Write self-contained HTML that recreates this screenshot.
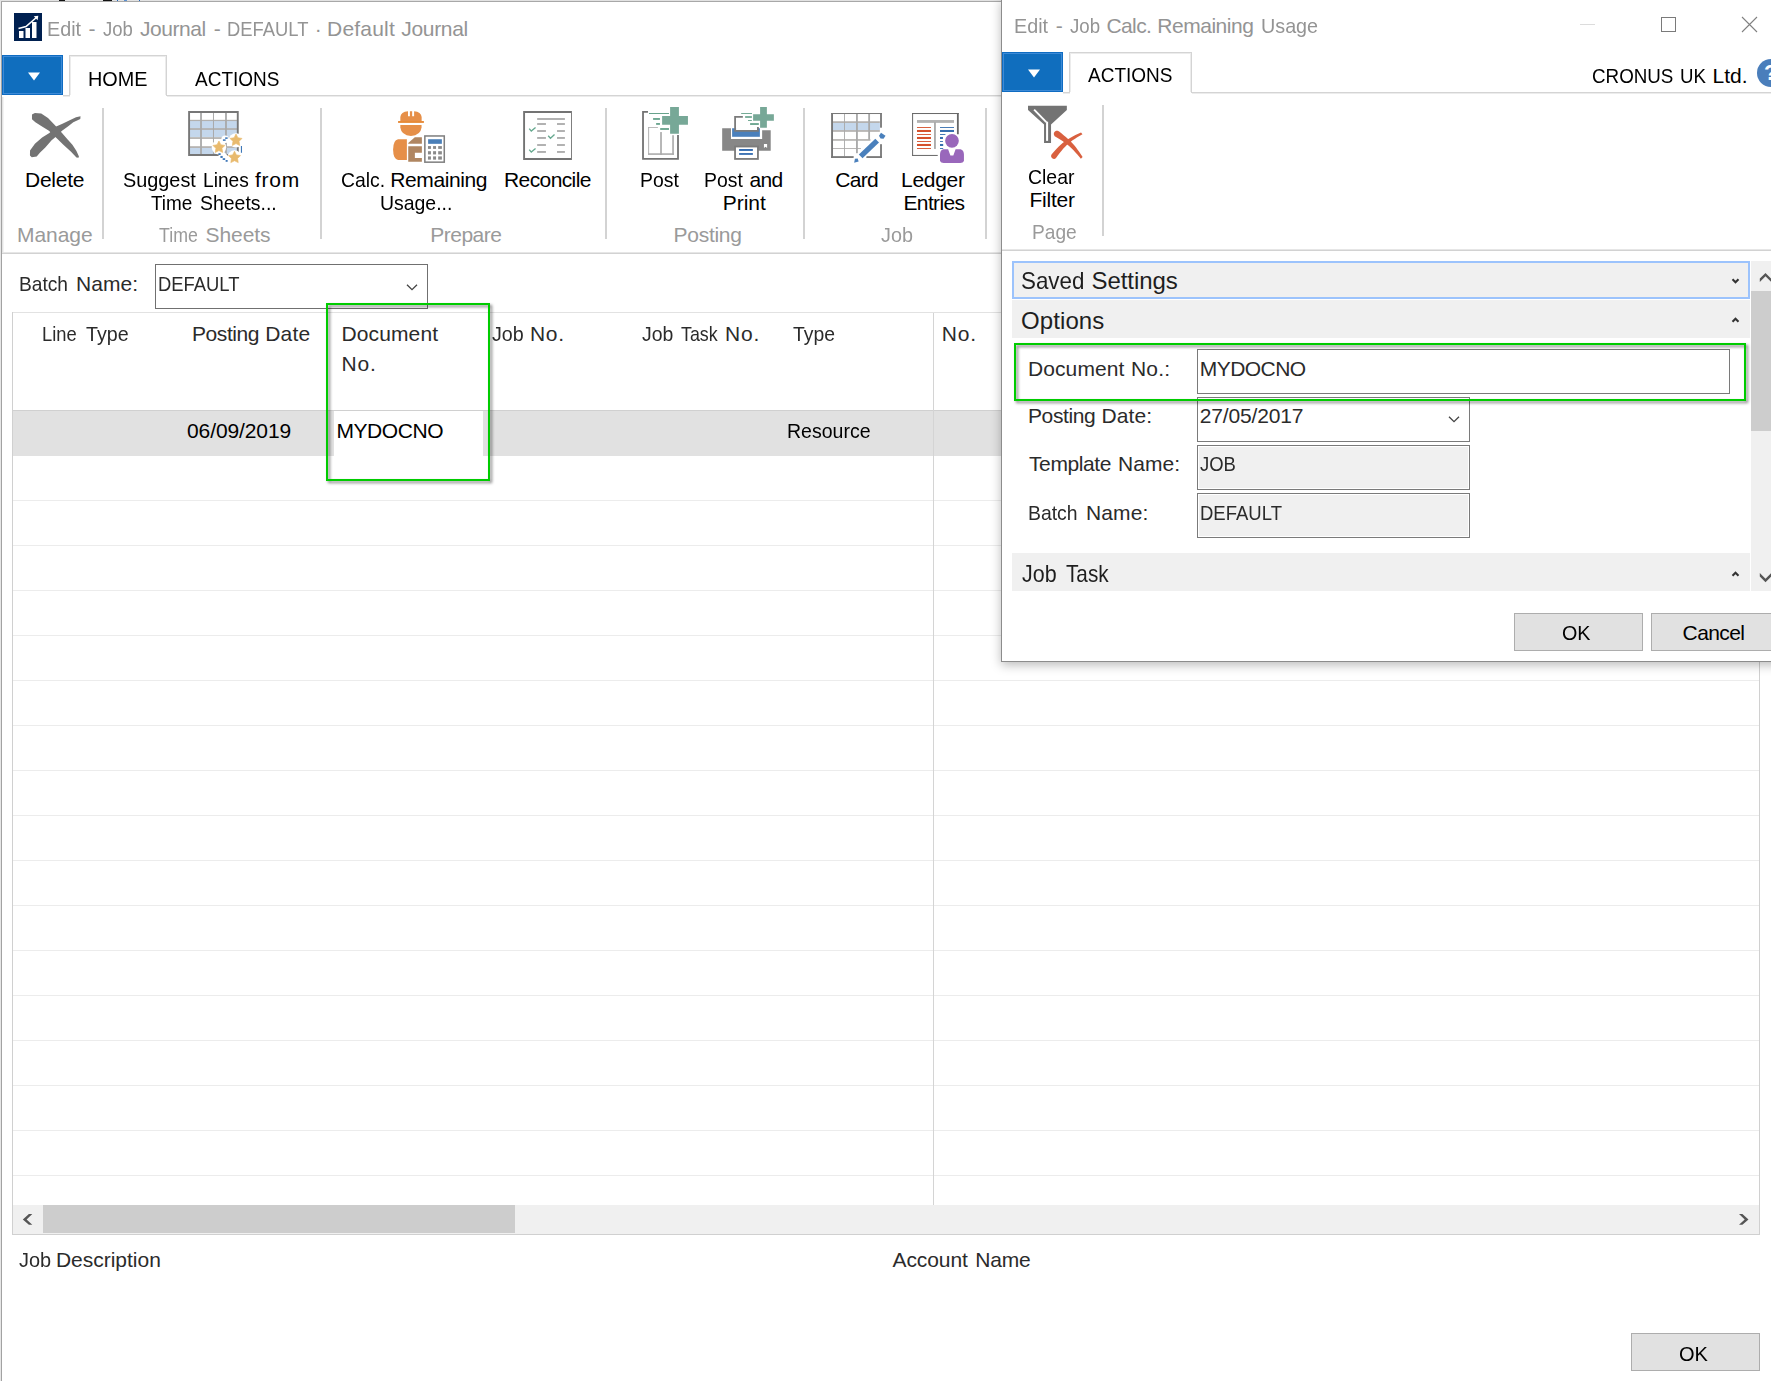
<!DOCTYPE html>
<html lang="en">
<head>
<meta charset="utf-8">
<title>Edit - Job Journal - DEFAULT · Default Journal</title>
<style>
html,body{margin:0;padding:0;}
body{width:1771px;height:1381px;position:relative;overflow:hidden;background:#fff;font-family:"Liberation Sans",sans-serif;}
.t{position:absolute;white-space:pre;line-height:1;z-index:30;transform-origin:0 0;}
.b{position:absolute;box-sizing:border-box;}
.ln{position:absolute;background:#d4d4d4;}
.ln2{position:absolute;background:#ececec;height:1px;}
.sep{position:absolute;width:2px;background:#d3d3d3;}
.rl{position:absolute;left:13px;width:1746px;height:1px;background:#ececec;}
.blue{background:#106ebe;box-shadow:inset 0 0 0 1px #0f6cc2, inset 0 0 0 2px #3d8ad6;}
.tab{border:1px solid #d4d4d4;border-bottom:none;background:#fff;box-shadow:inset 1px 1px 0 #ececec, inset -1px 0 0 #ececec;}
.btn{background:#e1e1e1;border:1px solid #adadad;}
.inp{border:1px solid #7a7a7a;background:#fff;}
.ro{background:#f0f0f0;box-shadow:inset 0 0 0 1px #fff;}
.band{background:#f0f0f0;}
.green{border:2px solid #00cc00;filter:drop-shadow(2.5px 2.5px 1.6px rgba(0,0,0,.5));z-index:40;}
svg{position:absolute;overflow:visible;}
#dlg{z-index:20;}
.d{z-index:25;}
</style>
</head>
<body>
<!-- ================= main window ================= -->
<div class="ln" style="left:0;top:0;width:1px;height:1381px;background:#e6e6e6"></div><div class="ln" style="left:1px;top:1px;width:1px;height:1380px;background:#a2a2a2"></div>
<div class="ln" style="left:0;top:0;width:1002px;height:1px;background:#e2e2e2"></div><div class="ln" style="left:1px;top:1px;width:1001px;height:1px;background:#a8a8a8"></div>
<div class="ln" style="left:59px;top:0;width:6px;height:1px;background:#111"></div><div class="ln" style="left:103px;top:0;width:9px;height:1px;background:#111"></div>
<div class="ln" style="left:117px;top:0;width:1px;height:1px;background:#1f66c0"></div><div class="ln" style="left:124px;top:0;width:3px;height:1px;background:#5a8fd0"></div><div class="ln" style="left:139px;top:0;width:1px;height:1px;background:#1f66c0"></div>
<div class="ln" style="left:2px;top:97px;width:1px;height:156px;background:#e4e4e4"></div><div class="ln" style="left:3px;top:97px;width:1px;height:156px;background:#f3f3f3"></div>

<div class="b" style="left:14px;top:13px;width:28px;height:28px;background:#002050"></div>
<svg style="left:14px;top:13px" width="28" height="28" viewBox="0 0 28 28">
 <rect x="5" y="18" width="4.5" height="7" fill="#fff"/><rect x="11.5" y="15" width="4.5" height="10" fill="#fff"/><rect x="18" y="9" width="4.5" height="16" fill="#fff"/>
 <path d="M4.5 15.5 L12 13.5 L23 4" stroke="#fff" stroke-width="1.6" fill="none"/><path d="M19.8 3.2 L24.3 2.8 L23.6 7.3 Z" fill="#fff"/>
</svg>

<div class="b blue" style="left:2px;top:55px;width:61px;height:40px"></div>
<svg style="left:28px;top:72px" width="12" height="9" viewBox="0 0 12 9"><path d="M0 0.5 H12 L6 8.5 Z" fill="#fff"/></svg>
<div class="b tab" style="left:69px;top:55px;width:98px;height:40px"></div>
<div class="ln" style="left:63px;top:95px;width:7px;height:1px"></div><div class="ln2" style="left:63px;top:96px;width:7px"></div>
<div class="ln" style="left:166px;top:95px;width:836px;height:1px"></div><div class="ln2" style="left:167px;top:96px;width:835px"></div>
<div class="ln" style="left:2px;top:252px;width:1000px;height:1px;background:#e6e6e6"></div><div class="ln" style="left:2px;top:253px;width:1000px;height:1px;background:#d2d2d2"></div>
<div class="sep" style="left:102px;top:108px;height:131px"></div>
<div class="sep" style="left:320px;top:108px;height:131px"></div>
<div class="sep" style="left:605px;top:108px;height:131px"></div>
<div class="sep" style="left:803px;top:108px;height:131px"></div>
<div class="sep" style="left:985px;top:108px;height:131px"></div>

<!-- batch name dropdown -->
<div class="b inp" style="left:155px;top:264px;width:273px;height:45px;border-color:#707070"></div>
<svg style="left:406px;top:284px" width="12" height="7" viewBox="0 0 12 7"><path d="M1 0.8 L6 5.6 L11 0.8" stroke="#444" stroke-width="1.3" fill="none"/></svg>

<!-- table -->
<div class="ln" style="left:12px;top:312px;width:1748px;height:1px;background:#e2e2e2"></div>
<div class="ln" style="left:12px;top:312px;width:1px;height:923px;background:#d0d0d0"></div>
<div class="ln" style="left:1759px;top:312px;width:1px;height:923px;background:#d0d0d0"></div>
<div class="ln" style="left:12px;top:1234px;width:1748px;height:1px;background:#d0d0d0"></div>
<div class="b" style="left:13px;top:410px;width:1746px;height:46px;background:#e1e1e1;border-top:1px solid #d0d0d0"></div>
<div class="b" style="left:334px;top:411px;width:149px;height:45px;background:#fff"></div>
<div class="rl" style="top:500px"></div>
<div class="rl" style="top:545px"></div>
<div class="rl" style="top:590px"></div>
<div class="rl" style="top:635px"></div>
<div class="rl" style="top:680px"></div>
<div class="rl" style="top:725px"></div>
<div class="rl" style="top:770px"></div>
<div class="rl" style="top:815px"></div>
<div class="rl" style="top:860px"></div>
<div class="rl" style="top:905px"></div>
<div class="rl" style="top:950px"></div>
<div class="rl" style="top:995px"></div>
<div class="rl" style="top:1040px"></div>
<div class="rl" style="top:1085px"></div>
<div class="rl" style="top:1130px"></div>
<div class="rl" style="top:1175px"></div>
<div class="ln" style="left:933px;top:313px;width:1px;height:892px;background:#d4d4d4"></div>
<!-- h scrollbar -->
<div class="b" style="left:13px;top:1205px;width:1746px;height:29px;background:#f0f0f0"></div>
<div class="b" style="left:43px;top:1205px;width:472px;height:28px;background:#cdcdcd"></div>
<svg style="left:0;top:0" width="1771" height="1381"><path fill="#555" d="M32.3 1214 H28.9 L22.8 1219.4 L28.9 1224.8 H32.3 L26.6 1219.4 Z"/><path fill="#555" d="M1739 1214 H1742.4 L1748.5 1219.4 L1742.4 1224.8 H1739 L1744.7 1219.4 Z"/></svg>
<div class="b btn" style="left:1631px;top:1333px;width:129px;height:38px"></div>

<!-- Delete -->
<svg style="left:20px;top:104px" width="80" height="62" viewBox="0 0 1771 1373">
 <path fill="#737373" d="M265 235 L330 200 L470 212 L620 310 L790 485 L930 640 L1050 780 L1160 900 L1250 1040 L1305 1160 L1295 1188 L1250 1182 L1130 1060 L960 905 L830 775 L640 595 L470 485 L340 405 L265 340 Z"/>
 <path fill="#737373" d="M222 1030 L330 880 L490 740 L650 640 L800 500 L940 440 L1100 360 L1240 292 L1340 272 L1335 330 L1180 405 L1060 500 L930 592 L800 722 L700 802 L560 962 L440 1082 L370 1165 L260 1178 L220 1140 Z"/>
</svg>
<!-- Suggest lines -->
<svg style="left:180px;top:104px" width="80" height="62" viewBox="0 0 1771 1373">
 <rect x="200" y="175" width="1080" height="955" fill="#fff"/>
 <rect x="220" y="375" width="1040" height="355" fill="#c4d7ec"/>
 <rect x="220" y="975" width="1040" height="150" fill="#c4d7ec"/>
 <g fill="#b2b0ae"><rect x="220" y="350" width="1040" height="28"/><rect x="220" y="535" width="1040" height="38"/><rect x="220" y="735" width="1040" height="38"/><rect x="220" y="935" width="1040" height="38"/></g>
 <g fill="#a9a9a9"><rect x="445" y="195" width="40" height="935"/><rect x="730" y="195" width="22" height="935"/><rect x="998" y="195" width="40" height="935"/></g>
 <path fill="none" stroke="#777" stroke-width="42" d="M201 176 H1279 V1129 H201 Z"/>
 <rect x="730" y="620" width="680" height="720" fill="#fff" opacity="0"/>
 <g fill="#fff"><circle cx="1240" cy="805" r="160"/><circle cx="862" cy="960" r="160"/><circle cx="1207" cy="1185" r="160"/><circle cx="1000" cy="780" r="85"/><circle cx="950" cy="1180" r="105"/></g>
 <g fill="#e8ba6e" stroke="#e8ba6e" stroke-width="14" stroke-linejoin="round">
  <path d="M1240 665 L1282 747 L1373 762 L1308 827 L1322 918 L1240 877 L1158 918 L1172 827 L1107 762 L1198 747 Z"/>
  <path d="M862 820 L904 902 L995 917 L930 982 L944 1073 L862 1032 L780 1073 L794 982 L729 917 L820 902 Z"/>
  <path d="M1207 1045 L1249 1127 L1340 1142 L1275 1207 L1289 1298 L1207 1257 L1125 1298 L1139 1207 L1074 1142 L1165 1127 Z"/>
 </g>
 <g fill="#3f78b8"><rect x="1000" y="738" width="55" height="35"/><rect x="950" y="782" width="60" height="35"/><rect x="850" y="1090" width="50" height="40"/><rect x="895" y="1150" width="50" height="45"/><rect x="945" y="1200" width="55" height="40"/><rect x="1010" y="1240" width="45" height="40"/><rect x="1348" y="930" width="25" height="150"/></g>
</svg>
<!-- Calc remaining usage -->
<svg style="left:380px;top:104px" width="80" height="62" viewBox="0 0 1771 1373">
 <path fill="#e68f48" d="M450 380 V290 Q460 170 620 160 V270 H662 V160 H712 V270 H755 V160 Q910 170 922 290 V380 Z"/>
 <rect x="400" y="378" width="572" height="40" fill="#e5842e"/>
 <path fill="#e68f48" d="M450 465 H920 V520 Q900 690 685 710 Q470 690 450 520 Z"/>
 <path fill="#e68f48" d="M595 780 V1238 H400 Q290 1220 290 1010 Q290 800 400 780 Z"/>
 <path fill="#b08661" d="M770 735 H927 V882 H625 V862 Z"/>
 <path fill="#b08661" d="M625 935 H927 V1080 H772 V1195 H927 V1280 H625 Z"/>
 <rect x="993" y="708" width="430" height="580" fill="#fff" stroke="#808080" stroke-width="34"/>
 <rect x="1065" y="780" width="305" height="102" fill="#4a7fb8"/>
 <g fill="#8a8a8a"><rect x="1062" y="932" width="66" height="62"/><rect x="1175" y="932" width="66" height="62"/><rect x="1288" y="932" width="82" height="62"/>
 <rect x="1062" y="1045" width="66" height="72"/><rect x="1175" y="1045" width="66" height="72"/><rect x="1288" y="1045" width="82" height="72"/>
 <rect x="1062" y="1160" width="66" height="72"/><rect x="1175" y="1160" width="66" height="72"/><rect x="1288" y="1160" width="82" height="72"/></g>
</svg>
<!-- Reconcile -->
<svg style="left:508px;top:104px" width="80" height="62" viewBox="0 0 1771 1373">
 <path fill="#737373" fill-rule="evenodd" d="M335 155 H1415 V1240 H335 Z M377 198 V1198 H1395 V198 Z"/>
 <g fill="#aaa"><rect x="645" y="312" width="615" height="40"/>
 <rect x="645" y="423" width="195" height="40"/><rect x="1085" y="423" width="175" height="40"/>
 <rect x="645" y="578" width="195" height="40"/><rect x="1085" y="578" width="175" height="40"/>
 <rect x="645" y="732" width="195" height="40"/><rect x="1085" y="732" width="175" height="40"/>
 <rect x="645" y="888" width="195" height="40"/><rect x="1085" y="888" width="175" height="40"/>
 <rect x="645" y="1042" width="195" height="40"/><rect x="1085" y="1042" width="175" height="40"/></g>
 <g fill="none" stroke="#4c9a7c" stroke-width="30" opacity="0.85"><path d="M470 545 L515 600 L610 520"/><path d="M890 702 L940 757 L1030 675"/><path d="M470 1010 L515 1065 L610 985"/></g>
</svg>
<!-- Post -->
<svg style="left:622px;top:100px" width="80" height="62" viewBox="0 0 1771 1373">
 <path fill="none" stroke="#737373" stroke-width="40" d="M575 265 H465 V1305 H1240 V775"/>
 <g fill="#aaa"><rect x="580" y="600" width="20" height="615"/><rect x="580" y="600" width="215" height="18"/><rect x="580" y="1180" width="570" height="35"/><rect x="845" y="710" width="37" height="505"/><rect x="1112" y="780" width="36" height="435"/></g>
 <g fill="#67a38c"><rect x="598" y="288" width="442" height="22"/><rect x="688" y="400" width="152" height="40"/><rect x="755" y="510" width="85" height="40"/><rect x="845" y="622" width="195" height="40"/></g>
 <path fill="#77a897" d="M1065 155 H1260 V355 H1460 V550 H1260 V750 H1065 V550 H888 V355 H1065 Z"/>
</svg>
<!-- Post and Print -->
<svg style="left:705px;top:100px" width="80" height="62" viewBox="0 0 1771 1373">
 <path fill="#878787" d="M380 625 H575 V865 H1265 V670 H1455 V1125 H380 Z"/>
 <path fill="#4a80bc" d="M600 625 H1215 V815 H600 Z"/>
 <rect x="688" y="395" width="467" height="270" fill="#fff"/>
 <path fill="none" stroke="#7b7b7b" stroke-width="40" d="M838 375 H666 V685 H1172 V598"/>
 <g fill="#67a38c"><rect x="800" y="288" width="240" height="20"/><rect x="888" y="358" width="150" height="37"/><rect x="952" y="445" width="86" height="20"/><rect x="998" y="512" width="194" height="40"/></g>
 <path fill="#77a897" d="M1220 155 H1370 V315 H1525 V462 H1370 V615 H1220 V462 H1065 V315 H1220 Z"/>
 <rect x="665" y="1030" width="507" height="275" fill="#fff" stroke="#7b7b7b" stroke-width="40"/>
 <rect x="755" y="1085" width="305" height="43" fill="#346cb0"/><rect x="755" y="1175" width="305" height="40" fill="#346cb0"/>
 <path fill="#fff" d="M1305 975 H1375 V1065 L1340 1035 L1305 1065 Z"/>
</svg>
<!-- Card -->
<svg style="left:818px;top:104px" width="80" height="62" viewBox="0 0 1771 1373">
 <rect x="330" y="420" width="1040" height="158" fill="#c4d7ec"/>
 <g fill="#b2b0ae"><rect x="330" y="382" width="1040" height="38"/><rect x="330" y="578" width="1040" height="38"/><rect x="330" y="778" width="830" height="36"/><rect x="330" y="975" width="620" height="20"/></g>
 <g fill="#a9a9a9"><rect x="577" y="220" width="20" height="940"/><rect x="842" y="220" width="40" height="870"/><rect x="1112" y="220" width="40" height="570"/></g>
 <g fill="#777"><rect x="290" y="200" width="42" height="995"/><rect x="290" y="200" width="1125" height="22"/><rect x="1375" y="200" width="40" height="325"/><rect x="1375" y="890" width="40" height="305"/><rect x="290" y="1155" width="500" height="40"/><rect x="1070" y="1155" width="345" height="40"/></g>
 <path fill="none" stroke="#fff" stroke-width="175" d="M850 1250 L1440 690"/>
 <path fill="none" stroke="#4a80bc" stroke-width="118" d="M945 1160 L1310 812"/>
 <path fill="#4a80bc" d="M800 1300 L818 1212 L878 1208 L900 1272 Z"/>
 <path fill="#4a80bc" d="M1350 705 L1395 635 L1495 702 L1450 770 L1385 765 Z"/>
</svg>
<!-- Ledger entries -->
<svg style="left:898px;top:104px" width="80" height="62" viewBox="0 0 1771 1373">
 <g fill="#666"><rect x="312" y="200" width="22" height="950"/><rect x="312" y="200" width="1033" height="22"/><rect x="1305" y="200" width="40" height="470"/><rect x="312" y="1128" width="568" height="22"/></g>
 <rect x="420" y="355" width="820" height="63" fill="#b2b2b2"/><rect x="798" y="400" width="40" height="595" fill="#a9a9a9"/>
 <g fill="#d5502b"><rect x="420" y="510" width="310" height="20"/><rect x="420" y="575" width="310" height="45"/><rect x="420" y="665" width="310" height="20"/><rect x="420" y="730" width="310" height="45"/><rect x="420" y="820" width="310" height="20"/><rect x="420" y="885" width="310" height="45"/><rect x="420" y="975" width="310" height="20"/></g>
 <g fill="#376fb0"><rect x="930" y="510" width="310" height="20"/><rect x="930" y="575" width="310" height="45"/><rect x="930" y="665" width="120" height="20"/><rect x="930" y="730" width="65" height="45"/><rect x="930" y="820" width="65" height="20"/><rect x="930" y="885" width="70" height="45"/><rect x="930" y="975" width="70" height="20"/></g>
 <circle cx="1195" cy="815" r="175" fill="#fff"/>
 <circle cx="1195" cy="815" r="152" fill="#9967bb"/>
 <path fill="#9967bb" d="M1000 1000 H1110 L1160 1140 H1225 L1275 1000 H1385 Q1460 1020 1460 1120 V1260 Q1440 1300 1380 1305 H1010 Q950 1300 930 1260 V1120 Q930 1020 1000 1000 Z"/>
</svg>
<!-- Clear filter -->
<svg class="d" style="left:1014px;top:100px" width="80" height="62" viewBox="0 0 1771 1373">
 <path fill="#737373" d="M310 130 H1170 V220 L820 545 V950 H665 V545 L310 220 Z"/>
 <rect x="710" y="480" width="45" height="425" fill="#fff"/>
 <path fill="none" stroke="#fff" stroke-width="42" d="M445 215 L715 490"/>
 <path fill="#d9603f" d="M901 800 L957 835 L1012 869 L1066 905 L1119 942 L1170 981 L1219 1021 L1266 1064 L1312 1108 L1356 1155 L1398 1202 L1440 1251 L1481 1300 L1519 1260 L1483 1206 L1446 1152 L1409 1100 L1370 1048 L1329 999 L1287 951 L1242 905 L1196 862 L1148 819 L1099 779 L1049 739 L999 700 L967 682 L931 683 L900 701 L882 733 L883 769 Z"/>
 <path fill="#d9603f" d="M926 1290 L966 1235 L1007 1181 L1049 1127 L1093 1076 L1138 1028 L1186 982 L1237 939 L1289 899 L1344 862 L1400 827 L1458 793 L1516 759 L1484 721 L1422 749 L1360 777 L1300 808 L1241 840 L1184 875 L1129 912 L1077 953 L1027 996 L980 1042 L933 1090 L888 1139 L844 1190 L824 1217 L821 1250 L835 1281 L862 1301 L895 1304 Z"/>
</svg>


<!-- green highlight 1 -->
<div class="b green" style="left:326px;top:303px;width:164px;height:178px"></div>

<!-- ================= dialog ================= -->
<div id="dlg" class="b" style="left:1001px;top:-2px;width:800px;height:664px;background:#fff;border:1px solid #8c8c8c;box-shadow:0 3px 10px rgba(0,0,0,.27)"></div>
<div class="b blue d" style="left:1002px;top:52px;width:61px;height:40px"></div>
<svg class="d" style="left:1028px;top:68.5px" width="12" height="9" viewBox="0 0 12 9"><path d="M0 0.5 H12 L6 8.5 Z" fill="#fff"/></svg>
<div class="b tab d" style="left:1069px;top:52px;width:123px;height:40px"></div>
<div class="ln d" style="left:1063px;top:92px;width:7px;height:1px"></div><div class="ln2 d" style="left:1063px;top:93px;width:7px"></div>
<div class="ln d" style="left:1191px;top:92px;width:580px;height:1px"></div><div class="ln2 d" style="left:1192px;top:93px;width:580px"></div>
<div class="ln d" style="left:1002px;top:249px;width:769px;height:1px;background:#e6e6e6"></div><div class="ln d" style="left:1002px;top:250px;width:769px;height:1px;background:#d2d2d2"></div>
<div class="sep d" style="left:1102px;top:105px;height:131px"></div>
<!-- window controls -->
<div class="ln d" style="left:1580px;top:24px;width:15px;height:1px;background:#dcdcdc"></div>
<div class="b d" style="left:1661px;top:17px;width:15px;height:15px;border:1px solid #7a7a7a"></div>
<svg class="d" style="left:1742px;top:17px" width="15" height="15" viewBox="0 0 15 15"><path d="M0 0 L15 15 M15 0 L0 15" stroke="#808080" stroke-width="1.1" fill="none"/></svg>
<!-- help -->
<div class="b d" style="left:1757px;top:59px;width:28px;height:28px;border-radius:14px;background:#4a7ebb"></div>
<span class="t" style="left:1764px;top:62px;font-size:22px;font-weight:bold;color:#fff;z-index:31">?</span>

<!-- fasttabs -->
<div class="b d" style="left:1012px;top:261px;width:738px;height:38px;background:#f0f0f0;border:2px solid #9cc3fc"></div>
<div class="b band d" style="left:1012px;top:300px;width:738px;height:38px"></div>
<div class="b band d" style="left:1012px;top:553px;width:738px;height:38px"></div>
<svg class="d" style="left:1731px;top:277.5px" width="9" height="6" viewBox="0 0 9 6"><path d="M1.5 1.2 L4.5 4.2 L7.5 1.2" stroke="#333" stroke-width="2.1" fill="none"/></svg>
<svg class="d" style="left:1731px;top:317px" width="9" height="6" viewBox="0 0 9 6"><path d="M1.5 4.8 L4.5 1.8 L7.5 4.8" stroke="#333" stroke-width="2.1" fill="none"/></svg>
<svg class="d" style="left:1731px;top:570.5px" width="9" height="6" viewBox="0 0 9 6"><path d="M1.5 4.8 L4.5 1.8 L7.5 4.8" stroke="#333" stroke-width="2.1" fill="none"/></svg>
<!-- fields -->
<div class="b inp d" style="left:1197px;top:349px;width:533px;height:45px"></div>
<div class="b inp d" style="left:1197px;top:397px;width:273px;height:45px"></div>
<div class="b inp ro d" style="left:1197px;top:445px;width:273px;height:45px"></div>
<div class="b inp ro d" style="left:1197px;top:493px;width:273px;height:45px"></div>
<svg class="d" style="left:1448px;top:416px" width="12" height="7" viewBox="0 0 12 7"><path d="M1 0.8 L6 5.6 L11 0.8" stroke="#444" stroke-width="1.3" fill="none"/></svg>
<!-- v scrollbar -->
<div class="b d" style="left:1751px;top:261px;width:20px;height:330px;background:#f0f0f0"></div>
<div class="b d" style="left:1751px;top:291px;width:20px;height:140px;background:#cdcdcd"></div>
<svg class="d" style="left:0;top:0" width="1771" height="700"><path fill="#555" d="M1759.8 282 V278.6 L1765.5 272.9 L1771.2 278.6 V282 L1765.5 276.3 Z"/><path fill="#555" d="M1759.8 573.1 V576.5 L1765.5 582.2 L1771.2 576.5 V573.1 L1765.5 578.8 Z"/></svg>
<!-- buttons -->
<div class="b btn d" style="left:1514px;top:613px;width:129px;height:38px"></div>
<div class="b btn d" style="left:1651px;top:613px;width:129px;height:38px"></div>

<!-- green highlight 2 -->
<div class="b green" style="left:1014px;top:343px;width:732px;height:58px"></div>

<span class="t" style="left:47.06px;top:18.00px;font-size:21px;transform:scaleX(0.9406);color:#949494">Edit</span>
<span class="t" style="left:88.62px;top:18.00px;font-size:21px;letter-spacing:0.000px;color:#949494">-</span>
<span class="t" style="left:102.50px;top:18.00px;font-size:21px;transform:scaleX(0.8816);color:#949494">Job</span>
<span class="t" style="left:140.00px;top:18.00px;font-size:21px;letter-spacing:-0.452px;color:#949494">Journal</span>
<span class="t" style="left:213.75px;top:18.00px;font-size:21px;letter-spacing:0.000px;color:#949494">-</span>
<span class="t" style="left:227.12px;top:18.00px;font-size:21px;transform:scaleX(0.8764);color:#949494">DEFAULT</span>
<span class="t" style="left:314.75px;top:18.00px;font-size:21px;letter-spacing:0.000px;color:#949494">·</span>
<span class="t" style="left:327.00px;top:18.00px;font-size:21px;letter-spacing:0.216px;color:#949494">Default</span>
<span class="t" style="left:401.25px;top:18.00px;font-size:21px;letter-spacing:-0.327px;color:#949494">Journal</span>
<span class="t" style="left:88.31px;top:68.00px;font-size:21px;transform:scaleX(0.9445);color:#000">HOME</span>
<span class="t" style="left:194.80px;top:68.00px;font-size:21px;transform:scaleX(0.9043);color:#000">ACTIONS</span>
<span class="t" style="left:25.00px;top:169.00px;font-size:21px;letter-spacing:-0.255px;color:#000">Delete</span>
<span class="t" style="left:123.25px;top:169.00px;font-size:21px;transform:scaleX(0.9453);color:#000">Suggest</span>
<span class="t" style="left:203.34px;top:169.00px;font-size:21px;transform:scaleX(0.9137);color:#000">Lines</span>
<span class="t" style="left:255.00px;top:169.00px;font-size:21px;letter-spacing:0.748px;color:#000">from</span>
<span class="t" style="left:151.25px;top:192.00px;font-size:21px;transform:scaleX(0.9014);color:#000">Time</span>
<span class="t" style="left:200.00px;top:192.00px;font-size:21px;transform:scaleX(0.9254);color:#000">Sheets...</span>
<span class="t" style="left:340.83px;top:169.00px;font-size:21px;transform:scaleX(0.9220);color:#000">Calc.</span>
<span class="t" style="left:390.25px;top:169.00px;font-size:21px;letter-spacing:-0.401px;color:#000">Remaining</span>
<span class="t" style="left:379.82px;top:192.00px;font-size:21px;transform:scaleX(0.9254);color:#000">Usage...</span>
<span class="t" style="left:504.00px;top:169.00px;font-size:21px;letter-spacing:-0.598px;color:#000">Reconcile</span>
<span class="t" style="left:639.83px;top:169.00px;font-size:21px;transform:scaleX(0.9226);color:#000">Post</span>
<span class="t" style="left:703.58px;top:169.00px;font-size:21px;transform:scaleX(0.9226);color:#000">Post</span>
<span class="t" style="left:749.50px;top:169.00px;font-size:21px;letter-spacing:-0.679px;color:#000">and</span>
<span class="t" style="left:722.75px;top:192.00px;font-size:21px;letter-spacing:-0.024px;color:#000">Print</span>
<span class="t" style="left:835.25px;top:169.00px;font-size:21px;letter-spacing:-0.696px;color:#000">Card</span>
<span class="t" style="left:901.00px;top:169.00px;font-size:21px;letter-spacing:-0.279px;color:#000">Ledger</span>
<span class="t" style="left:903.50px;top:192.00px;font-size:21px;letter-spacing:-0.643px;color:#000">Entries</span>
<span class="t" style="left:17.00px;top:224.00px;font-size:21px;letter-spacing:-0.042px;color:#9a9a9a">Manage</span>
<span class="t" style="left:159.25px;top:224.00px;font-size:21px;transform:scaleX(0.8461);color:#9a9a9a">Time</span>
<span class="t" style="left:205.50px;top:224.00px;font-size:21px;letter-spacing:-0.076px;color:#9a9a9a">Sheets</span>
<span class="t" style="left:430.25px;top:224.00px;font-size:21px;letter-spacing:-0.505px;color:#9a9a9a">Prepare</span>
<span class="t" style="left:673.50px;top:224.00px;font-size:21px;letter-spacing:-0.269px;color:#9a9a9a">Posting</span>
<span class="t" style="left:881.25px;top:224.00px;font-size:21px;transform:scaleX(0.9419);color:#9a9a9a">Job</span>
<span class="t" style="left:18.59px;top:273.00px;font-size:21px;transform:scaleX(0.9131);color:#2b2b2b">Batch</span>
<span class="t" style="left:76.00px;top:273.00px;font-size:21px;letter-spacing:0.058px;color:#2b2b2b">Name:</span>
<span class="t" style="left:158.37px;top:273.00px;font-size:21px;transform:scaleX(0.8764);color:#2b2b2b">DEFAULT</span>
<span class="t" style="left:42.13px;top:323.00px;font-size:21px;transform:scaleX(0.8744);color:#2b2b2b">Line</span>
<span class="t" style="left:86.25px;top:323.00px;font-size:21px;transform:scaleX(0.9365);color:#2b2b2b">Type</span>
<span class="t" style="left:192.00px;top:323.00px;font-size:21px;letter-spacing:-0.436px;color:#2b2b2b">Posting</span>
<span class="t" style="left:265.25px;top:323.00px;font-size:21px;letter-spacing:0.190px;color:#2b2b2b">Date</span>
<span class="t" style="left:341.50px;top:323.00px;font-size:21px;letter-spacing:0.118px;color:#2b2b2b">Document</span>
<span class="t" style="left:341.50px;top:353.00px;font-size:21px;letter-spacing:0.828px;color:#2b2b2b">No.</span>
<span class="t" style="left:492.10px;top:323.00px;font-size:21px;transform:scaleX(0.9373);color:#2b2b2b">Job</span>
<span class="t" style="left:529.90px;top:323.00px;font-size:21px;letter-spacing:0.778px;color:#2b2b2b">No.</span>
<span class="t" style="left:642.40px;top:323.00px;font-size:21px;transform:scaleX(0.9253);color:#2b2b2b">Job</span>
<span class="t" style="left:680.70px;top:323.00px;font-size:21px;transform:scaleX(0.8494);color:#2b2b2b">Task</span>
<span class="t" style="left:725.10px;top:323.00px;font-size:21px;letter-spacing:0.778px;color:#2b2b2b">No.</span>
<span class="t" style="left:793.00px;top:323.00px;font-size:21px;transform:scaleX(0.9209);color:#2b2b2b">Type</span>
<span class="t" style="left:941.80px;top:323.00px;font-size:21px;letter-spacing:0.828px;color:#2b2b2b">No.</span>
<span class="t" style="left:187.00px;top:420.00px;font-size:21px;letter-spacing:-0.103px;color:#000">06/09/2019</span>
<span class="t" style="left:336.50px;top:420.00px;font-size:21px;letter-spacing:-0.439px;color:#000">MYDOCNO</span>
<span class="t" style="left:787.07px;top:420.00px;font-size:21px;transform:scaleX(0.9297);color:#000">Resource</span>
<span class="t" style="left:18.60px;top:1249.00px;font-size:21px;transform:scaleX(0.9494);color:#2b2b2b">Job</span>
<span class="t" style="left:55.90px;top:1249.00px;font-size:21px;letter-spacing:-0.006px;color:#2b2b2b">Description</span>
<span class="t" style="left:892.50px;top:1249.00px;font-size:21px;letter-spacing:-0.091px;color:#2b2b2b">Account</span>
<span class="t" style="left:975.25px;top:1249.00px;font-size:21px;letter-spacing:-0.196px;color:#2b2b2b">Name</span>
<span class="t" style="left:1679.05px;top:1343.00px;font-size:21px;transform:scaleX(0.9545);color:#000">OK</span>
<span class="t" style="left:1014.06px;top:15.00px;font-size:21px;transform:scaleX(0.9406);color:#949494">Edit</span>
<span class="t" style="left:1055.75px;top:15.00px;font-size:21px;letter-spacing:0.000px;color:#949494">-</span>
<span class="t" style="left:1069.50px;top:15.00px;font-size:21px;transform:scaleX(0.8891);color:#949494">Job</span>
<span class="t" style="left:1106.50px;top:15.00px;font-size:21px;letter-spacing:-0.628px;color:#949494">Calc.</span>
<span class="t" style="left:1157.25px;top:15.00px;font-size:21px;letter-spacing:-0.463px;color:#949494">Remaining</span>
<span class="t" style="left:1261.06px;top:15.00px;font-size:21px;transform:scaleX(0.9403);color:#949494">Usage</span>
<span class="t" style="left:1088.25px;top:64.00px;font-size:21px;transform:scaleX(0.9048);color:#000">ACTIONS</span>
<span class="t" style="left:1591.51px;top:65.00px;font-size:21px;transform:scaleX(0.8945);color:#000">CRONUS</span>
<span class="t" style="left:1680.11px;top:65.00px;font-size:21px;transform:scaleX(0.8876);color:#000">UK</span>
<span class="t" style="left:1712.50px;top:65.00px;font-size:21px;letter-spacing:0.002px;color:#000">Ltd.</span>
<span class="t" style="left:1027.83px;top:166.00px;font-size:21px;transform:scaleX(0.9250);color:#000">Clear</span>
<span class="t" style="left:1029.50px;top:189.00px;font-size:21px;letter-spacing:-0.234px;color:#000">Filter</span>
<span class="t" style="left:1032.09px;top:221.00px;font-size:21px;transform:scaleX(0.9131);color:#9a9a9a">Page</span>
<span class="t" style="left:1021.07px;top:269.00px;font-size:24px;transform:scaleX(0.9322);color:#1e1e1e">Saved</span>
<span class="t" style="left:1091.50px;top:269.00px;font-size:24px;letter-spacing:-0.074px;color:#1e1e1e">Settings</span>
<span class="t" style="left:1021.00px;top:309.00px;font-size:24px;letter-spacing:0.098px;color:#1e1e1e">Options</span>
<span class="t" style="left:1028.00px;top:358.00px;font-size:21px;letter-spacing:0.089px;color:#2b2b2b">Document</span>
<span class="t" style="left:1131.00px;top:358.00px;font-size:21px;letter-spacing:0.190px;color:#2b2b2b">No.:</span>
<span class="t" style="left:1199.75px;top:358.00px;font-size:21px;letter-spacing:-0.555px;color:#2b2b2b">MYDOCNO</span>
<span class="t" style="left:1028.00px;top:405.00px;font-size:21px;letter-spacing:-0.394px;color:#2b2b2b">Posting</span>
<span class="t" style="left:1101.50px;top:405.00px;font-size:21px;letter-spacing:0.098px;color:#2b2b2b">Date:</span>
<span class="t" style="left:1199.75px;top:405.00px;font-size:21px;letter-spacing:-0.158px;color:#2b2b2b">27/05/2017</span>
<span class="t" style="left:1029.00px;top:453.00px;font-size:21px;letter-spacing:-0.397px;color:#2b2b2b">Template</span>
<span class="t" style="left:1118.00px;top:453.00px;font-size:21px;letter-spacing:0.058px;color:#2b2b2b">Name:</span>
<span class="t" style="left:1200.25px;top:453.00px;font-size:21px;transform:scaleX(0.8786);color:#2b2b2b">JOB</span>
<span class="t" style="left:1028.08px;top:502.00px;font-size:21px;transform:scaleX(0.9227);color:#2b2b2b">Batch</span>
<span class="t" style="left:1086.00px;top:502.00px;font-size:21px;letter-spacing:0.121px;color:#2b2b2b">Name:</span>
<span class="t" style="left:1199.87px;top:502.00px;font-size:21px;transform:scaleX(0.8819);color:#2b2b2b">DEFAULT</span>
<span class="t" style="left:1021.50px;top:562.00px;font-size:24px;transform:scaleX(0.8931);color:#1e1e1e">Job</span>
<span class="t" style="left:1065.75px;top:562.00px;font-size:24px;transform:scaleX(0.8630);color:#1e1e1e">Task</span>
<span class="t" style="left:1562.36px;top:622.00px;font-size:21px;transform:scaleX(0.9409);color:#000">OK</span>
<span class="t" style="left:1682.60px;top:622.00px;font-size:21px;letter-spacing:-0.601px;color:#000">Cancel</span>
</body>
</html>
